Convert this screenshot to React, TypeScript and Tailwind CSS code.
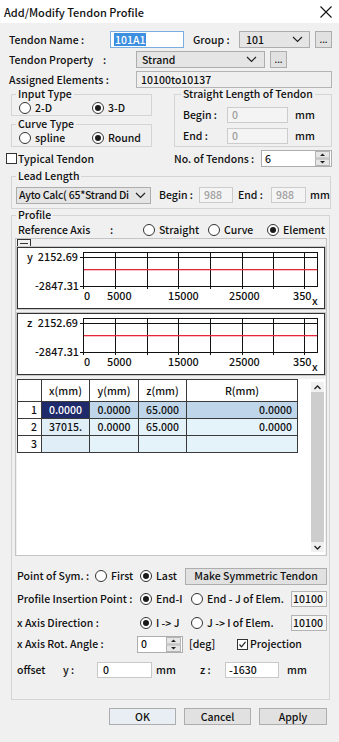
import React from "react";

// 다이얼로그 공통 폰트
const FONT = "font-['Noto_Sans_CJK_KR','Noto_Sans',sans-serif]";

const Chevron = () => (
  <svg width="11" height="7" viewBox="0 0 11 7" className="shrink-0">
    <polyline points="1,1 5.5,5.5 10,1" fill="none" stroke="#222" strokeWidth="1.2" />
  </svg>
);

const Select = ({ value, className = "" }: { value: string; className?: string }) => (
  <div className={`h-[17px] bg-[#e5e5e5] border border-[#adadad] flex items-center justify-between ${className}`}>
    <span className="whitespace-nowrap overflow-hidden">{value}</span>
    <Chevron />
  </div>
);

const Dots = ({ className = "" }: { className?: string }) => (
  <div className={`w-[17px] h-[17px] bg-[#e1e1e1] border border-[#adadad] flex items-end justify-center pb-[3px] text-[9px] leading-none ${className}`}>
    ...
  </div>
);

const Radio = ({ checked, label, className = "" }: { checked?: boolean; label: string; className?: string }) => (
  <div className={`flex items-center ${className}`}>
    <span className="w-[12px] h-[12px] rounded-full border border-[#333] bg-white flex items-center justify-center shrink-0">
      {checked && <span className="w-[6px] h-[6px] rounded-full bg-[#1a1a1a]" />}
    </span>
    <span className="ml-[4px] whitespace-nowrap">{label}</span>
  </div>
);

const Checkbox = ({ checked }: { checked?: boolean }) => (
  <span className="w-[11px] h-[11px] border border-[#333] bg-white flex items-center justify-center shrink-0">
    {checked && (
      <svg width="9" height="9" viewBox="0 0 9 9">
        <polyline points="1.5,4.5 3.5,6.8 7.5,1.8" fill="none" stroke="#222" strokeWidth="1.2" />
      </svg>
    )}
  </span>
);

const SpinArrows = () => (
  <svg width="15" height="15" viewBox="0 0 15 15" className="shrink-0">
    <rect x="0.5" y="0.5" width="14" height="6.5" fill="#e6e6e6" stroke="#b4b4b4" />
    <rect x="0.5" y="8" width="14" height="6.5" fill="#e6e6e6" stroke="#b4b4b4" />
    <polygon points="5,5 10,5 7.5,2.5" fill="#222" />
    <polygon points="5,10 10,10 7.5,12.5" fill="#222" />
  </svg>
);

const Spin = ({ value, className = "" }: { value: string; className?: string }) => (
  <div className={`h-[17px] bg-white border border-[#adadad] flex items-center pr-[1px] ${className}`}>
    <span className="flex-1 pl-[3px]">{value}</span>
    <SpinArrows />
  </div>
);

// 비활성 입력창
const Disabled = ({ value, className = "" }: { value: string; className?: string }) => (
  <div className={`h-[16px] bg-[#f4f4f4] border border-[#cccccc] text-[#a0a0a0] flex items-center pl-[4px] ${className}`}>
    {value}
  </div>
);

const Button = ({ children, className = "" }: { children: React.ReactNode; className?: string }) => (
  <div className={`h-[17px] bg-[#e1e1e1] border border-[#adadad] flex items-center justify-center whitespace-nowrap ${className}`}>
    {children}
  </div>
);

// 프로파일 그래프 (y / z)
const Graph = ({ axis }: { axis: string }) => {
  const grid = [97, 129, 160, 192, 224, 255, 286];
  const ticks = [
    { x: 66, t: "0" },
    { x: 89, t: "5000" },
    { x: 150, t: "15000" },
    { x: 211, t: "25000" },
    { x: 275, t: "350" },
  ];
  return (
    <div className="h-[62px] bg-white border border-[#333] shadow-[0_0_0_1px_#c8c8c8]">
      <svg width="306" height="60" viewBox="0 0 306 60" fontSize="10.8" fill="#111">
        <text x="9" y="13">{axis}</text>
        <text x="60" y="13" textAnchor="end">2152.69</text>
        <text x="61" y="42" textAnchor="end">-2847.31</text>
        <g shapeRendering="crispEdges" stroke="#111">
          <line x1="65" y1="4.5" x2="299" y2="4.5" />
          <line x1="62" y1="9.5" x2="299" y2="9.5" />
          <line x1="62" y1="38.5" x2="299" y2="38.5" />
          <line x1="65.5" y1="4" x2="65.5" y2="41" />
          <line x1="299.5" y1="4" x2="299.5" y2="39" />
          {grid.map((x) => (
            <line key={x} x1={x + 0.5} y1="4" x2={x + 0.5} y2="41" />
          ))}
        </g>
        <rect x="66" y="21" width="233" height="1.3" fill="#e5283c" />
        {ticks.map((k) => (
          <text key={k.t} x={k.x} y="52">{k.t}</text>
        ))}
        <text x="294" y="57">x</text>
      </svg>
    </div>
  );
};

const rows = [
  { n: "1", x: "0.0000", y: "0.0000", z: "65.000", r: "0.0000" },
  { n: "2", x: "37015.", y: "0.0000", z: "65.000", r: "0.0000" },
  { n: "3", x: "", y: "", z: "", r: "" },
];

const cell = "border border-[#3a3a3a] p-0";

const App = () => {
  return (
    <div className={`w-[339px] h-[742px] bg-[#f0f0f0] text-[10.5px] font-medium leading-[16px] text-[#111] overflow-hidden ${FONT}`}>
      {/* 타이틀 바 */}
      <div className="h-[23px] bg-white flex items-center justify-between pl-[4px] pr-[7px]">
        <span className="text-[11px]">Add/Modify Tendon Profile</span>
        <svg width="12" height="12" viewBox="0 0 12 12">
          <path d="M0.5 0.5 L11.5 11.5 M11.5 0.5 L0.5 11.5" stroke="#111" strokeWidth="1.1" />
        </svg>
      </div>

      <div className="pl-[9px] pr-[7px]">
        {/* 긴장재 이름 */}
        <div className="mt-[8px] h-[17px] flex items-center">
          <span className="w-[101px]">Tendon Name :</span>
          <div className="w-[74px] h-[17px] bg-white border border-[#7aaee0] flex items-center pl-[3px]">
            <span className="bg-[#3d8fe0] text-white leading-[13px] px-[1px]">101A1</span>
          </div>
          <span className="ml-[9px] w-[46px]">Group :</span>
          <Select value="101" className="w-[71px] pl-[6px] pr-[6px]" />
          <Dots className="ml-[5px]" />
        </div>

        <div className="mt-[3px] h-[17px] flex items-center">
          <span className="w-[94px]">Tendon Property</span>
          <span className="w-[33px]">:</span>
          <Select value="Strand" className="w-[129px] pl-[5px] pr-[7px]" />
          <Dots className="ml-[5px]" />
        </div>

        <div className="mt-[3px] h-[17px] flex items-center">
          <span className="w-[127px]">Assigned Elements :</span>
          <div className="w-[196px] h-[17px] bg-[#efefef] border border-[#b4b4b4] flex items-center pl-[4px]">
            10100to10137
          </div>
        </div>

        {/* 입력 타입 / 곡선 타입 / 직선 길이 */}
        <div className="mt-[-1px] flex">
          <div className="ml-[2px] w-[141px] flex flex-col">
            <fieldset className="h-[29px] border border-[#d4d4d4] pl-[7px]">
              <legend className="ml-[-3px] px-[2px] leading-[14px]">Input Type</legend>
              <div className="h-[14px] flex items-center">
                <Radio label="2-D" className="w-[73px]" />
                <Radio label="3-D" checked />
              </div>
            </fieldset>
            <fieldset className="mt-[1px] h-[30px] border border-[#d4d4d4] pl-[7px]">
              <legend className="ml-[-3px] px-[2px] leading-[14px]">Curve Type</legend>
              <div className="h-[14px] flex items-center">
                <Radio label="spline" className="w-[73px]" />
                <Radio label="Round" checked />
              </div>
            </fieldset>
          </div>
          <fieldset className="ml-[22px] w-[158px] h-[60px] border border-[#d4d4d4] pl-[8px]">
            <legend className="ml-[-2px] px-[2px] leading-[14px]">Straight Length of Tendon</legend>
            <div className="mt-[6px] h-[16px] flex items-center">
              <span className="w-[44px]">Begin :</span>
              <Disabled value="0" className="w-[61px]" />
              <span className="ml-[7px]">mm</span>
            </div>
            <div className="mt-[5px] h-[16px] flex items-center">
              <span className="w-[44px]">End :</span>
              <Disabled value="0" className="w-[61px]" />
              <span className="ml-[7px]">mm</span>
            </div>
          </fieldset>
        </div>

        {/* 대표 긴장재 / 긴장재 수 */}
        <div className="mt-[3px] h-[17px] flex items-center ml-[-3px]">
          <div className="w-[168px] flex items-center">
            <Checkbox />
            <span className="ml-[1px]">Typical Tendon</span>
          </div>
          <span className="w-[87px] whitespace-nowrap">No. of Tendons :</span>
          <Spin value="6" className="w-[71px]" />
        </div>

        {/* 리드 길이 */}
        <fieldset className="mt-[2px] ml-[2px] w-[320px] h-[40px] border border-[#d4d4d4] pl-[4px]">
          <legend className="px-[2px] leading-[14px]">Lead Length</legend>
          <div className="mt-[4px] h-[16px] flex items-center">
            <Select value="Ayto Calc( 65*Strand Di" className="w-[135px] h-[16px] pl-[2px] pr-[4px] tracking-[-0.25px]" />
            <span className="ml-[8px] w-[40px]">Begin :</span>
            <Disabled value="988" className="w-[34px]" />
            <span className="ml-[5px] w-[33px]">End :</span>
            <Disabled value="988" className="w-[35px]" />
            <span className="ml-[4px]">mm</span>
          </div>
        </fieldset>

        {/* 프로파일 */}
        <fieldset className="mt-[-1px] ml-[2px] w-[319px] h-[492px] border border-[#d4d4d4]">
          <legend className="ml-[4px] px-[2px] leading-[14px]">Profile</legend>
          <div className="h-[16px] flex items-center pl-[6px]">
            <span className="w-[92px]">Reference Axis</span>
            <span className="w-[33px]">:</span>
            <Radio label="Straight" className="w-[65px]" />
            <Radio label="Curve" className="w-[59px]" />
            <Radio label="Element" checked />
          </div>

          <div className="ml-[3px] w-[312px] h-[318px] border border-[#c4c4c4] px-[1px] flex flex-col">
            <div className="w-[14px] h-[8px] border-t border-x border-[#333] flex items-center justify-center">
              <span className="w-[8px] h-px bg-[#333]" />
            </div>
            <Graph axis="y" />
            <div className="mt-[4px]">
              <Graph axis="z" />
            </div>
            <div className="mt-[4px] h-[176px] bg-white flex">
              <table className="border-collapse table-fixed w-[280px] h-fit">
                <colgroup>
                  <col className="w-[24px]" />
                  <col className="w-[48px]" />
                  <col className="w-[49px]" />
                  <col className="w-[48px]" />
                  <col className="w-[111px]" />
                </colgroup>
                <thead>
                  <tr className="h-[22px] bg-white">
                    <th className={cell} />
                    <th className={`${cell} font-medium`}>x(mm)</th>
                    <th className={`${cell} font-medium`}>y(mm)</th>
                    <th className={`${cell} font-medium`}>z(mm)</th>
                    <th className={`${cell} font-medium`}>R(mm)</th>
                  </tr>
                </thead>
                <tbody>
                  {rows.map((r, i) => (
                    <tr key={r.n} className={i === 2 ? "h-[16px]" : "h-[17px]"}>
                      <td className={`${cell} bg-white text-right pr-[4px]`}>{r.n}</td>
                      <td
                        className={`${cell} text-center ${
                          i === 0 ? "bg-[#1f2a6b] text-white" : "bg-[#e0eef8]"
                        }`}
                      >
                        {r.x}
                      </td>
                      <td className={`${cell} text-center ${i === 0 ? "bg-[#bfd6ea]" : "bg-[#e4f2fa]"}`}>{r.y}</td>
                      <td className={`${cell} text-center ${i === 0 ? "bg-[#bfd6ea]" : "bg-[#e4f2fa]"}`}>{r.z}</td>
                      <td className={`${cell} text-right pr-[5px] ${i === 0 ? "bg-[#bfd6ea]" : "bg-[#e4f2fa]"}`}>{r.r}</td>
                    </tr>
                  ))}
                </tbody>
              </table>
              {/* 스크롤바 */}
              <div className="ml-[13px] mt-[3px] w-[13px] h-[170px] flex flex-col bg-[#f0f0f0]">
                <div className="h-[10px] flex items-center justify-center">
                  <svg width="7" height="5" viewBox="0 0 7 5">
                    <polyline points="0.5,4 3.5,1 6.5,4" fill="none" stroke="#222" strokeWidth="1.3" />
                  </svg>
                </div>
                <div className="flex-1 bg-[#cdcdcd]" />
                <div className="h-[10px] flex items-center justify-center">
                  <svg width="7" height="5" viewBox="0 0 7 5">
                    <polyline points="0.5,1 3.5,4 6.5,1" fill="none" stroke="#222" strokeWidth="1.3" />
                  </svg>
                </div>
              </div>
            </div>
          </div>

          {/* 대칭 / 삽입점 / 축 방향 */}
          <div className="pl-[5px]">
            <div className="mt-[12px] h-[16px] flex items-center">
              <span className="w-[78px] whitespace-nowrap">Point of Sym. :</span>
              <Radio label="First" className="w-[45px]" />
              <Radio label="Last" checked className="w-[45px]" />
              <Button className="w-[142px] h-[16px]">Make Symmetric Tendon</Button>
            </div>
            <div className="mt-[7px] h-[16px] flex items-center">
              <span className="w-[123px] whitespace-nowrap">Profile Insertion Point :</span>
              <Radio label="End-I" checked className="w-[51px]" />
              <Radio label="End - J of Elem." className="w-[100px]" />
              <div className="w-[36px] h-[16px] bg-[#f5f5f5] border border-[#b4b4b4] flex items-center justify-end pr-[3px]">10100</div>
            </div>
            <div className="mt-[8px] h-[16px] flex items-center">
              <span className="w-[123px]">x Axis Direction :</span>
              <Radio label="I -> J" checked className="w-[51px]" />
              <Radio label="J -> I of Elem." className="w-[100px]" />
              <div className="w-[36px] h-[16px] bg-[#f5f5f5] border border-[#b4b4b4] flex items-center justify-end pr-[3px]">10100</div>
            </div>
            <div className="mt-[5px] h-[16px] flex items-center">
              <span className="w-[120px]">x Axis Rot. Angle :</span>
              <Spin value="0" className="w-[46px] h-[16px]" />
              <span className="ml-[6px] w-[48px]">[deg]</span>
              <Checkbox checked />
              <span className="ml-[2px]">Projection</span>
            </div>
            <div className="mt-[10px] h-[16px] flex items-center">
              <span className="w-[46px]">offset</span>
              <span className="w-[34px]">y :</span>
              <div className="w-[55px] h-[16px] bg-white border border-[#c8c8c8] flex items-center pl-[5px]">0</div>
              <span className="ml-[4px] w-[44px]">mm</span>
              <span className="w-[25px]">z :</span>
              <div className="w-[54px] h-[16px] bg-white border border-[#c8c8c8] flex items-center pl-[3px]">-1630</div>
              <span className="ml-[8px]">mm</span>
            </div>
          </div>
        </fieldset>

        {/* 하단 버튼 */}
        <div className="mt-[8px] flex">
          <Button className="ml-[100px] w-[67px] bg-[#e9eef5] border-[#5b8fd4]">OK</Button>
          <Button className="ml-[8px] w-[67px]">Cancel</Button>
          <Button className="ml-[8px] w-[68px]">Apply</Button>
        </div>
      </div>
    </div>
  );
};

export default App;
